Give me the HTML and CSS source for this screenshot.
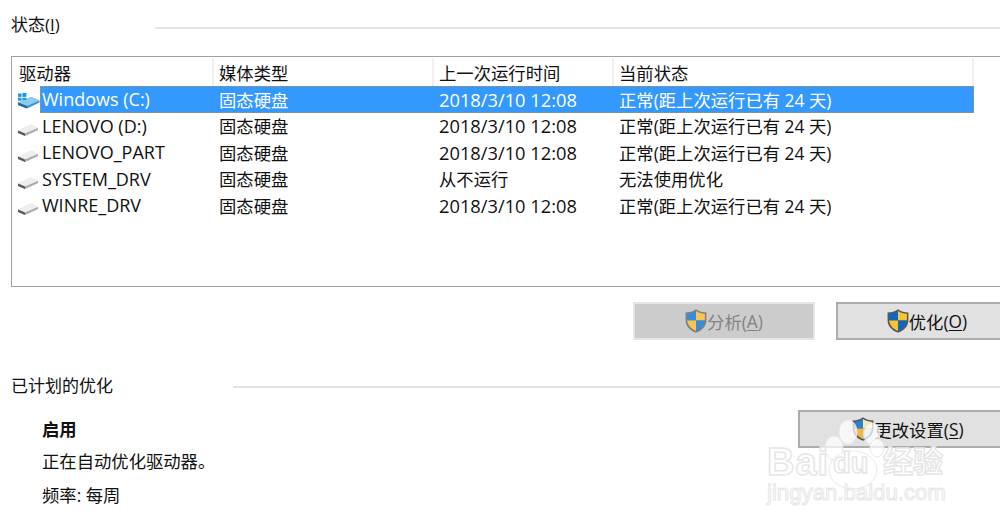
FILE: index.html
```html
<!DOCTYPE html>
<html lang="zh-CN">
<head>
<meta charset="utf-8">
<title>优化驱动器</title>
<link rel="stylesheet" href="styles.css">
</head>
<body>
<svg class="defs" width="0" height="0" aria-hidden="true">
  <defs>
    <symbol id="shield" viewBox="1 .5 20 23">
      <path d="M11 .8C8 3 4.600 3.800 1 3.800V11c0 6 4 10 10 12.300C17 21 21 17 21 11V3.800C17.400 3.800 14 3 11 .8Z" fill="#54595c"/>
      <path d="M11 2.400C8.500 4 5.500 5 2.500 5.200V11.500H11Z" fill="#0f68c0"/>
      <path d="M11 2.400C13.500 4 16.500 5 19.500 5.200V11.500H11Z" fill="#fdc22f"/>
      <path d="M2.500 11.500H11V21.500C6 19.500 3 16 2.500 11.500Z" fill="#fdc22f"/>
      <path d="M19.500 11.500H11V21.500C16 19.500 19 16 19.500 11.500Z" fill="#0f68c0"/>
    </symbol>
    <symbol id="shield-off" viewBox="1 .5 20 23">
      <path d="M11 .8C8 3 4.600 3.800 1 3.800V11c0 6 4 10 10 12.300C17 21 21 17 21 11V3.800C17.400 3.800 14 3 11 .8Z" fill="#7c7f80"/>
      <path d="M11 2.400C8.500 4 5.500 5 2.500 5.200V11.500H11Z" fill="#3b8cd8"/>
      <path d="M11 2.400C13.500 4 16.500 5 19.500 5.200V11.500H11Z" fill="#f6c552"/>
      <path d="M2.500 11.500H11V21.500C6 19.500 3 16 2.500 11.500Z" fill="#f6c552"/>
      <path d="M19.500 11.500H11V21.500C16 19.500 19 16 19.500 11.500Z" fill="#3b8cd8"/>
    </symbol>
    <symbol id="shield-soft" viewBox="1 .5 20 23">
      <path d="M11 .8C8 3 4.600 3.800 1 3.800V11c0 6 4 10 10 12.300C17 21 21 17 21 11V3.800C17.400 3.800 14 3 11 .8Z" fill="#54595c"/>
      <path d="M11 2.400C8.500 4 5.500 5 2.500 5.200V11.500H11Z" fill="#2f80cc"/>
      <path d="M11 2.400C13.500 4 16.500 5 19.500 5.200V11.500H11Z" fill="#fbe6b4"/>
      <path d="M2.500 11.500H11V21.500C6 19.500 3 16 2.500 11.500Z" fill="#f2b642"/>
      <path d="M19.500 11.500H11V21.500C16 19.500 19 16 19.500 11.500Z" fill="#bcd8f0"/>
    </symbol>
    <symbol id="drive" viewBox="-1 -7 24 24">
      <path d="M1 9.500 14 3.500 21 7 21 9 8 15 1 12Z" fill="#d8d8d8"/>
      <path d="M1 9.500 14 3.500 21 7 8 12.500Z" fill="#eeeeee"/>
      <path d="M1 9.500 8 12.500V15L1 12Z" fill="#55585a"/>
      <path d="M8 12.500 21 7V9L8 15Z" fill="#a9abad"/>
    </symbol>
    <symbol id="drive-win" viewBox="0 0 24 24">
      <path d="M2 15.500 15 10 23.500 13.500V15.500L11 21.500 2 18Z" fill="#3d95cf"/>
      <path d="M2 15.500 15 10 23.500 13.500 11 19Z" fill="#8ccdf0"/>
      <path d="M2 15.500 11 19V21.500L2 18Z" fill="#22699c"/>
      <rect x="2" y="6.500" width="3.600" height="3.400" fill="#1c9be0"/>
      <rect x="6.400" y="6" width="4" height="3.900" fill="#1c9be0"/>
      <rect x="2" y="10.700" width="3.600" height="3" fill="#1c9be0"/>
      <rect x="6.400" y="10.700" width="4" height="2.400" fill="#1c9be0"/>
    </symbol>
  </defs>
</svg>

<section class="group-title status-title">
  <h2 class="group-label">状态(<u>I</u>)</h2>
  <span class="rule"></span>
</section>

<section class="list">
  <div class="row head">
    <div class="cell first">驱动器</div>
    <div class="cell">媒体类型</div>
    <div class="cell">上一次运行时间</div>
    <div class="cell">当前状态</div>
  </div>
  <div class="row item">
    <svg class="drive-icon"><use href="#drive-win"/></svg>
    <div class="selected">
      <div class="cell name">Windows (C:)</div>
      <div class="cell">固态硬盘</div>
      <div class="cell date">2018/3/10 12:08</div>
      <div class="cell">正常(距上次运行已有 24 天)</div>
    </div>
  </div>
  <div class="row item">
    <svg class="drive-icon"><use href="#drive"/></svg>
    <div class="plain">
      <div class="cell name">LENOVO (D:)</div>
      <div class="cell">固态硬盘</div>
      <div class="cell date">2018/3/10 12:08</div>
      <div class="cell">正常(距上次运行已有 24 天)</div>
    </div>
  </div>
  <div class="row item">
    <svg class="drive-icon"><use href="#drive"/></svg>
    <div class="plain">
      <div class="cell name">LENOVO_PART</div>
      <div class="cell">固态硬盘</div>
      <div class="cell date">2018/3/10 12:08</div>
      <div class="cell">正常(距上次运行已有 24 天)</div>
    </div>
  </div>
  <div class="row item">
    <svg class="drive-icon"><use href="#drive"/></svg>
    <div class="plain">
      <div class="cell name">SYSTEM_DRV</div>
      <div class="cell">固态硬盘</div>
      <div class="cell">从不运行</div>
      <div class="cell">无法使用优化</div>
    </div>
  </div>
  <div class="row item">
    <svg class="drive-icon"><use href="#drive"/></svg>
    <div class="plain">
      <div class="cell name">WINRE_DRV</div>
      <div class="cell">固态硬盘</div>
      <div class="cell date">2018/3/10 12:08</div>
      <div class="cell">正常(距上次运行已有 24 天)</div>
    </div>
  </div>
</section>

<section class="actions">
  <button class="btn disabled"><svg class="shield"><use href="#shield-off"/></svg>分析(<u>A</u>)</button>
  <button class="btn optimise"><svg class="shield"><use href="#shield"/></svg>优化(<u>O</u>)</button>
</section>

<section class="group-title plan-title">
  <h2 class="group-label">已计划的优化</h2>
  <span class="rule"></span>
</section>

<section class="plan">
  <div class="plan-text">
    <p class="plan-state">启用</p>
    <p class="plan-line">正在自动优化驱动器。</p>
    <p class="plan-freq">频率: 每周</p>
  </div>
  <button class="btn settings"><svg class="shield"><use href="#shield-soft"/></svg>更改设置(<u>S</u>)</button>
</section>

<div class="watermark" aria-hidden="true">
  <svg class="paw" viewBox="0 0 180 90">
    <g fill="#ffffff" fill-opacity=".72" stroke="#e9e9e9" stroke-width="1">
      <ellipse cx="69" cy="38" rx="9" ry="12"/>
      <ellipse cx="83" cy="22" rx="9" ry="12"/>
      <ellipse cx="107" cy="24" rx="8" ry="11"/>
      <ellipse cx="112" cy="38" rx="7" ry="9"/>
      <ellipse cx="88" cy="60" rx="24" ry="19"/>
    </g>
  </svg>
  <span class="wm-logo">Bai</span>
  <span class="wm-du">du</span>
  <span class="wm-cn">经验</span>
  <span class="wm-url">jingyan.baidu.com</span>
</div>
</body>
</html>
```
FILE: styles.css
```css
* { box-sizing: border-box; }
html, body { margin: 0; padding: 0; }
body {
  position: relative;
  width: 1000px;
  height: 525px;
  overflow: hidden;
  background: #fff;
  color: #111;
  font-family: "Open Sans", "Noto Sans CJK SC", sans-serif;
  font-size: 17.330px;
  padding-top: 13px;
}
.defs { position: absolute; }
u { text-underline-offset: 2px; }

.group-title { display: flex; align-items: center; padding-left: 12px; }
.group-label { margin: 0 0 0 -1px; font-size: 17px; font-weight: 400; line-height: 24px; }
.rule { height: 2px; background: #e3e3e3; flex: 1; }
.status-title .rule { margin-left: 95px; margin-top: 6px; }
.plan-title .rule { margin-left: 120px; margin-top: 2px; }

.list {
  margin: 19px 0 0 11px;
  height: 231px;
  border: 1px solid #a0a0a0;
  border-right: 0;
  padding-top: 1px;
}
.row { height: 26.500px; }
.head {
  height: 28px;
  display: grid;
  grid-template-columns: 202px 220px 180px 360px;
  width: 962px;
}
.head .cell {
  border-right: 2px solid #f0f0f0;
  padding-left: 5px;
  line-height: 30px;
}
.head .first { padding-left: 7px; }
.item { display: flex; align-items: center; padding-left: 4px; }
.drive-icon { width: 24px; height: 24px; flex: none; }
.selected, .plain {
  display: grid;
  grid-template-columns: 173px 220px 180px 361px;
  width: 934px;
  height: 26.500px;
  align-items: center;
}
.selected {
  background: #3399ff;
  color: #fff;
  outline: 1px dotted #c98a4a;
  outline-offset: -1px;
}
.cell { white-space: nowrap; padding-left: 6px; }
.cell.name { padding-left: 2px; font-size: 18px; }
.cell.date { font-size: 18.300px; }

.actions {
  display: flex;
  justify-content: flex-end;
  gap: 21px;
  margin: 15px -18px 0 0;
}
.btn {
  height: 38px;
  width: 182px;
  display: flex;
  align-items: center;
  justify-content: center;
  font: inherit;
  color: #111;
  background: #e1e1e1;
  border: 2px solid #adadad;
  padding: 0;
}
.disabled { background: #cccccc; border-color: #e6e6e6; color: #838383; }
.shield { width: 22px; height: 24px; flex: none; }

.plan-title { margin-top: 34px; }
.plan { display: flex; justify-content: space-between; margin: 12px -18px 0 42px; }
.plan-text p { margin: 0; }
.plan-state { font-weight: 700; line-height: 24px; margin-top: 7px !important; }
.plan-line { line-height: 24px; margin-top: 8px !important; }
.plan-freq { line-height: 24px; margin-top: 10px !important; }
.settings { width: 220px; }

.watermark {
  position: absolute;
  left: 765px;
  top: 410px;
  width: 190px;
  height: 100px;
  pointer-events: none;
  color: #fff;
  font-family: "Liberation Sans", "Noto Sans CJK SC", sans-serif;
  font-weight: 700;
  white-space: nowrap;
  -webkit-text-stroke: 1.500px #e6e6e6;
}
.paw { position: absolute; left: 0; top: 0; width: 180px; height: 90px; }
.wm-logo, .wm-du, .wm-cn, .wm-url { position: absolute; }
.wm-logo { left: 2px; top: 30px; font-size: 38px; line-height: 44px; letter-spacing: 1px; }
.wm-du { left: 68px; top: 36px; font-size: 29px; line-height: 34px; }
.wm-cn { left: 118px; top: 32px; font-size: 30px; line-height: 40px; }
.wm-url { left: 2px; top: 70px; font-size: 22.200px; line-height: 26px; font-weight: 400; -webkit-text-stroke-width: 1px; }
```
